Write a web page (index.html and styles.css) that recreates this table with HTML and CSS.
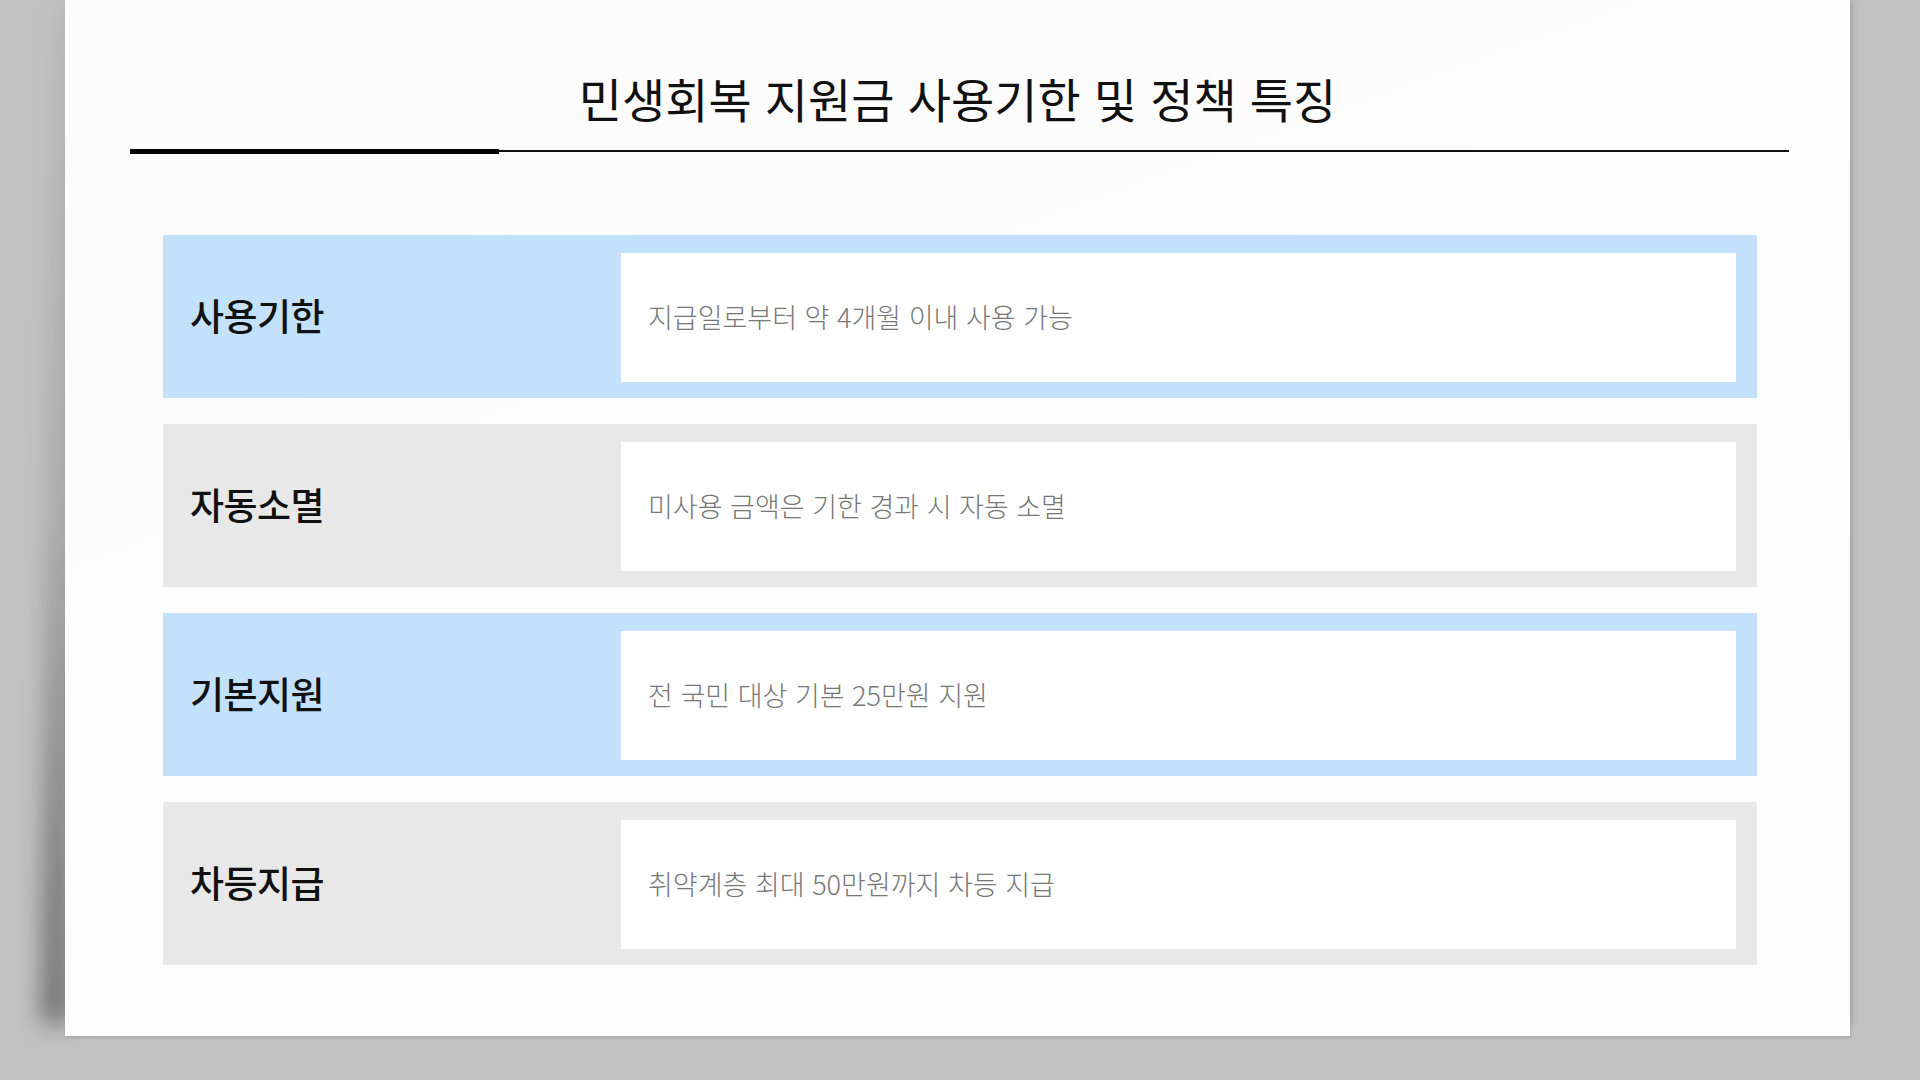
FILE: index.html
```html
<!DOCTYPE html>
<html lang="ko">
<head>
<meta charset="utf-8">
<title>민생회복 지원금 사용기한 및 정책 특징</title>
<link rel="stylesheet" href="styles.css">
</head>
<body>
<div class="stage">
  <main class="slide">
    <header class="head">
      <h1 class="title">민생회복 지원금 사용기한 및 정책 특징</h1>
      <div class="rule"><span class="rule-accent"></span></div>
    </header>
    <section class="rows">
      <div class="row row-blue">
        <div class="label">사용기한</div>
        <div class="desc">지급일로부터 약 4개월 이내 사용 가능</div>
      </div>
      <div class="row row-gray">
        <div class="label">자동소멸</div>
        <div class="desc">미사용 금액은 기한 경과 시 자동 소멸</div>
      </div>
      <div class="row row-blue">
        <div class="label">기본지원</div>
        <div class="desc">전 국민 대상 기본 25만원 지원</div>
      </div>
      <div class="row row-gray">
        <div class="label">차등지급</div>
        <div class="desc">취약계층 최대 50만원까지 차등 지급</div>
      </div>
    </section>
  </main>
</div>
</body>
</html>
```
FILE: styles.css
```css
html, body {
  margin: 0;
  padding: 0;
}
body {
  background: #c2c2c2;
  width: 1920px;
  height: 1080px;
  overflow: hidden;
  font-family: "Noto Sans CJK KR", "Noto Sans", sans-serif;
}
.stage {
  display: flex;
  padding-left: 65px;
}
.slide {
  position: relative;
  width: 1785px;
  height: 1036px;
  background: linear-gradient(160deg, #fbfbfb 0%, #fdfdfd 40%, #fefefe 100%);
  box-shadow: 1px 2px 3px rgba(0, 0, 0, 0.12);
  display: flex;
  flex-direction: column;
}
.slide::before {
  content: "";
  position: absolute;
  left: -10px;
  top: 0;
  bottom: 12px;
  width: 30px;
  background: linear-gradient(to bottom, rgba(0, 0, 0, 0.05) 0%, rgba(0, 0, 0, 0.14) 50%, rgba(0, 0, 0, 0.36) 85%, rgba(0, 0, 0, 0.42) 100%);
  filter: blur(12px);
  transform: skewX(-0.8deg);
  transform-origin: top left;
  z-index: -1;
}
.slide::after {
  content: "";
  position: absolute;
  right: 4px;
  top: 0;
  bottom: 10px;
  width: 20px;
  box-shadow: 6px 0 8px rgba(0, 0, 0, 0.12);
  z-index: -1;
}
.head {
  padding-top: 70px;
}
.title {
  margin: 0;
  text-align: center;
  font-size: 47px;
  line-height: 56px;
  font-weight: 400;
  color: #111;
  letter-spacing: 0;
}
.rule {
  position: relative;
  margin: 24px 61px 0 65px;
  height: 0;
  border-top: 2px solid #111;
}
.rule-accent {
  position: absolute;
  left: 0;
  top: -3px;
  width: 369px;
  height: 5px;
  background: #000;
}
.rows {
  margin: 83px 93px 0 98px;
  display: flex;
  flex-direction: column;
  gap: 26px;
}
.row {
  height: 163px;
  box-sizing: border-box;
  padding: 18px 21px 16px 0;
  display: flex;
}
.row-blue {
  background: #c4e1fc;
}
.row-gray {
  background: #e8e8e8;
}
.label {
  width: 458px;
  flex: none;
  box-sizing: border-box;
  padding: 0 0 5px 27px;
  display: flex;
  align-items: center;
  font-size: 37px;
  font-weight: 500;
  color: #111;
  letter-spacing: -0.5px;
}
.desc {
  flex: 1;
  background: #fff;
  display: flex;
  align-items: center;
  padding: 0 0 3px 27px;
  font-size: 27px;
  font-weight: 300;
  color: #777;
  letter-spacing: 0;
}
```
